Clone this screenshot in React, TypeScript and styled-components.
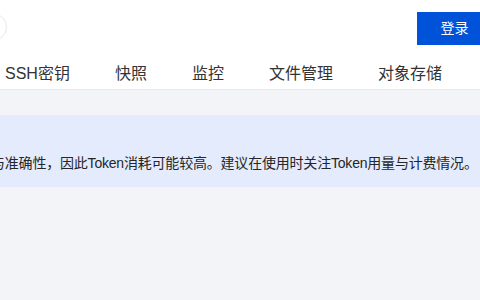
import React from "react";
import styled, { createGlobalStyle } from "styled-components";

const Global = createGlobalStyle`
  html, body { margin: 0; padding: 0; }
  body {
    width: 480px;
    height: 300px;
    overflow: hidden;
    background: #f3f4f8;
    font-family: "Liberation Sans", "Noto Sans CJK SC", sans-serif;
  }
`;

const Page = styled.div`
  width: 480px;
  height: 300px;
  overflow: hidden;
  display: flex;
  flex-direction: column;
  background: #f3f4f8;
`;

const Header = styled.header`
  background: #ffffff;
  border-bottom: 1px solid #e8e9ee;
  display: flex;
  flex-direction: column;
`;

const TopBar = styled.div`
  height: 57px;
  display: flex;
  align-items: flex-start;
  justify-content: space-between;
  padding-top: 12px;
  box-sizing: border-box;
`;

const SearchEnd = styled.div`
  width: 28px;
  height: 28px;
  margin-top: 1px;
  margin-left: -21px;
  border: 1px solid #e6e7ee;
  border-radius: 50%;
  box-sizing: border-box;
  background: #fff;
`;

const LoginButton = styled.button`
  width: 75px;
  height: 33px;
  margin-right: -12px;
  border: none;
  background: #0052d9;
  color: #ffffff;
  font-family: "Noto Sans CJK SC", sans-serif;
  font-size: 14px;
  padding: 0 0 3px;
  display: flex;
  align-items: center;
  justify-content: center;
`;

const Tabs = styled.nav`
  height: 32px;
  display: flex;
  align-items: flex-start;
  gap: 45px;
  padding: 7px 0 0 5px;
  box-sizing: border-box;
`;

const Tab = styled.div`
  font-size: 16px;
  line-height: 20px;
  color: #333333;
  white-space: nowrap;
`;

const Content = styled.main`
  padding-top: 25px;
`;

const Banner = styled.div`
  height: 72px;
  background: #e3ebfd;
  padding-top: 38px;
  box-sizing: border-box;
  overflow: hidden;
`;

const BannerText = styled.p`
  margin: 0 0 0 -9px;
  font-size: 14px;
  line-height: 20px;
  letter-spacing: -0.2px;
  color: #262626;
  white-space: nowrap;
`;

export default function App() {
  return (
    <>
      <Global />
      <Page>
        <Header>
          <TopBar>
            <SearchEnd />
            <LoginButton>登录</LoginButton>
          </TopBar>
          <Tabs>
            <Tab>SSH密钥</Tab>
            <Tab>快照</Tab>
            <Tab>监控</Tab>
            <Tab>文件管理</Tab>
            <Tab>对象存储</Tab>
          </Tabs>
        </Header>
        <Content>
          <Banner>
            <BannerText>
              与准确性，因此Token消耗可能较高。建议在使用时关注Token用量与计费情况。
            </BannerText>
          </Banner>
        </Content>
      </Page>
    </>
  );
}
